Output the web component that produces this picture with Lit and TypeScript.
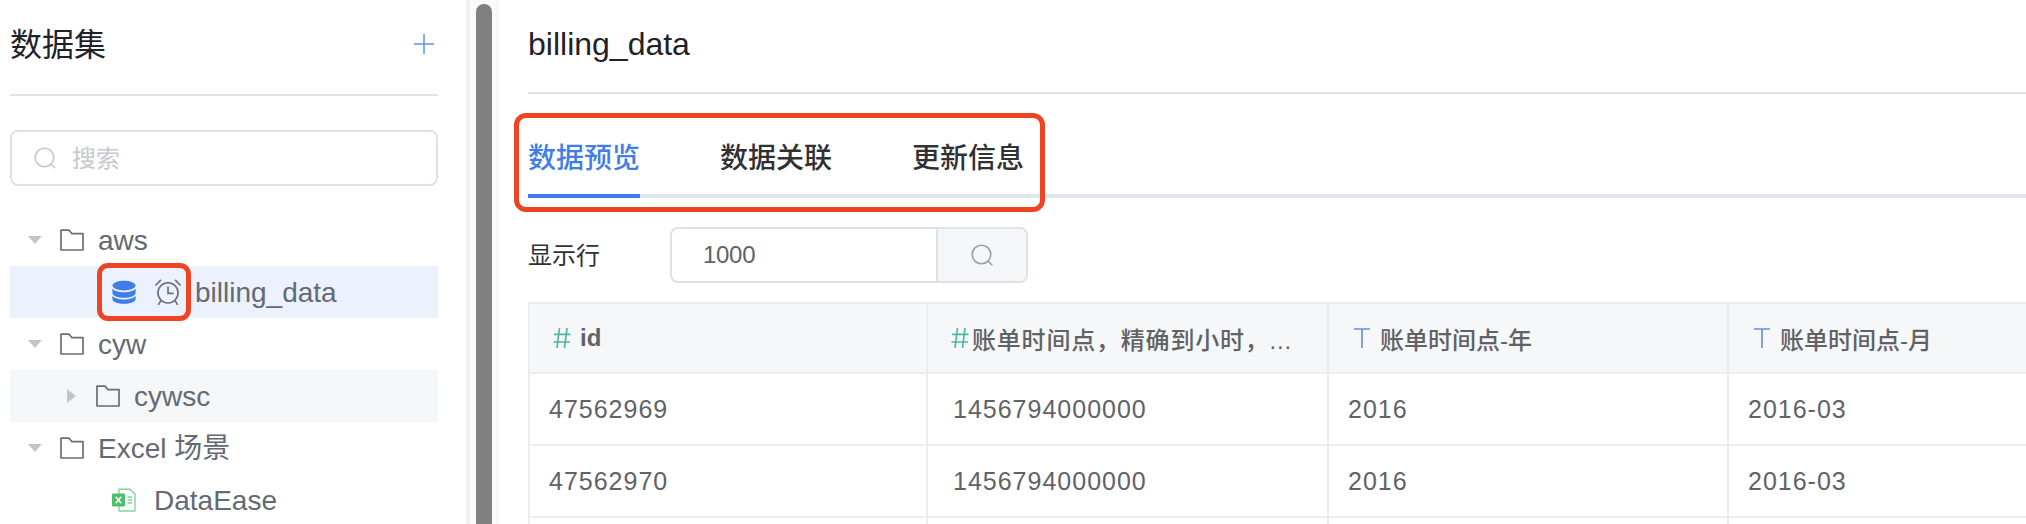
import { LitElement, html, css } from "lit";
import { customElement } from "lit/decorators.js";

const folder = html`<svg class="folder" viewBox="0 0 24 22" fill="none" stroke="#6b6d73" stroke-width="1.7"><path d="M1 21V1.2h8.2l2.6 3.4H23V21z" stroke-linejoin="round"/></svg>`;
const caretDown = html`<svg class="caret" viewBox="0 0 14 8"><path d="M0 0h14L7 8z" fill="#c0c4cc"/></svg>`;
const caretRight = html`<svg class="caret-r" viewBox="0 0 9 14"><path d="M0 0v14l9-7z" fill="#c0c4cc"/></svg>`;
const search = (c: string) => html`<svg class="search" viewBox="0 0 22 22" fill="none" stroke="${c}" stroke-width="1.6"><circle cx="10.5" cy="10.5" r="9.3"/><path d="M17.2 17.2l3.6 3.6" stroke-linecap="round"/></svg>`;
const db = html`<svg class="ico" viewBox="0 0 24 24"><g fill="#3f7ee8"><ellipse cx="12" cy="5.6" rx="11.6" ry="4.8"/><path d="M.4 8.6c2 2.6 6.6 3.7 11.600 3.700s9.600-1.100 11.600-3.700v4.300c0 2.700-5.200 4.800-11.600 4.800S.4 15.600.4 12.900z"/><path d="M.4 15.800c2 2.600 6.600 3.700 11.600 3.700s9.600-1.100 11.600-3.700V19c0 2.700-5.200 4.800-11.600 4.800S.4 21.700.4 19z"/></g></svg>`;
const clock = html`<svg class="ico clock" viewBox="0 0 24 24" fill="none" stroke="#6b6d73" stroke-width="1.5" stroke-linecap="round"><circle cx="12" cy="12.800" r="9.300"/><path d="M12 7.500v5.800h4.600M.8 5.500L5 1.300M23.200 5.500L19 1.300M5.400 20l-2 3.400M18.600 20l2 3.400"/></svg>`;
const excel = html`<svg class="ico" viewBox="0 0 24 24"><path d="M7 1.200h11l5 5v16a.8.8 0 0 1-.8.8H7.800a.8.8 0 0 1-.8-.8z" fill="#fff" stroke="#7ed69a" stroke-width="1.400"/><rect x="0" y="5.500" width="13" height="13" rx="1" fill="#4cbf6b"/><path d="M3.800 8.800l5.400 6.400M9.200 8.800l-5.400 6.400" stroke="#fff" stroke-width="1.500"/><path d="M15.500 9h4.500M15.500 12h4.500M15.500 15h4.500" stroke="#7ed69a" stroke-width="1.400"/></svg>`;
const hash = html`<svg class="type" viewBox="0 0 18 22" fill="none" stroke="#4fb5a6" stroke-width="1.700"><path d="M6.500 1L4 21M14 1l-2.500 20M1 7.300h16.500M.5 15h16.500"/></svg>`;
const tee = html`<svg class="type" viewBox="0 0 18 22" fill="none" stroke="#6d8fdc" stroke-width="1.700"><path d="M1 2h16M9 2v19"/></svg>`;

const cols = [
  { icon: hash, name: "id", cls: "b", vals: ["47562969", "47562970", ""] },
  { icon: hash, name: "账单时间点，精确到小时，...", cls: "wide", vals: ["1456794000000", "1456794000000", ""] },
  { icon: tee, name: "账单时间点-年", cls: "", vals: ["2016", "2016", ""] },
  { icon: tee, name: "账单时间点-月", cls: "", vals: ["2016-03", "2016-03", ""] },
];

@customElement("app-root")
export class AppRoot extends LitElement {
  static styles = css`
    :host { display: block; width: 2026px; height: 524px; overflow: hidden; background: #fff;
      font-family: "Liberation Sans", "Noto Sans CJK SC", sans-serif; color: #606266; }
    * { box-sizing: border-box; }
    .page { display: grid; grid-template-columns: 466px 32px 1fr; height: 524px; overflow: hidden; }
    .side { padding: 0 28px 0 10px; }
    .side-head { height: 96px; border-bottom: 2px solid #e0e2e9; display: flex; justify-content: space-between; align-items: center; padding: 0 4px 11px 0; }
    .side-title { font-size: 32px; color: #1f2329; }
    .plus { width: 20px; height: 20px; margin-top: 5px; }
    .search-box { margin-top: 34px; height: 56px; border: 2px solid #dfe1e8; border-radius: 8px; display: flex; align-items: center; padding-left: 22px; gap: 16px; font-size: 24px; color: #c6c8ce; }
    .search-box span { padding-bottom: 4px; }
    .search { width: 22px; height: 22px; flex: none; }
    .tree { margin-top: 28px; }
    .row { position: relative; height: 52px; display: flex; align-items: center; font-size: 28px; color: #646a73; white-space: nowrap; }
    .row span { line-height: 32px; padding-top: 2px; }
    .row.sel { background: #ebf2fd; }
    .row.hov { background: #f5f6f8; }
    .caret { width: 14px; height: 8px; margin-left: 18px; flex: none; }
    .caret-r { width: 9px; height: 14px; margin-left: 57px; flex: none; }
    .folder { width: 24px; height: 22px; margin-left: 18px; margin-right: 14px; flex: none; }
    .caret-r + .folder { margin-left: 20px; }
    .ico { width: 24px; height: 24px; flex: none; }
    .l3 { padding-left: 102px; }
    .ico.clock { width: 26px; height: 26px; margin-left: 19px; margin-right: 14px; }
    .gap { margin-left: 3px; }
    .gap-x { margin-right: 15px; }
    .l3 > .ico:only-of-type { margin-right: 15px; }
    .mark { position: absolute; left: 87px; top: -3px; width: 94px; height: 58px; border: 5px solid #ee4423; border-radius: 11px; }
    .gutter { border-left: 4px solid #f0f0f0; border-right: 1px solid #eeeeee; padding: 4px 0 0 6px; background: #fafafa; }
    .thumb { width: 16px; height: 560px; background: #808080; border-radius: 8px; }
    .main { padding-left: 30px; min-width: 0; }
    .main-head { height: 94px; border-bottom: 2px solid #e0e2e9; font-size: 32px; color: #1f2329; display: flex; align-items: center; padding-bottom: 4px; }
    .tabs { position: relative; height: 104px; border-bottom: 4px solid #e0e5f0; display: flex; gap: 80px; align-items: flex-end; font-size: 28px; font-weight: 500; color: #303133; }
    .tab { height: 62px; margin-bottom: -4px; border-bottom: 4px solid transparent; width: 112px; white-space: nowrap; }
    .tab.on { color: #3f7ee8; border-bottom-color: #3f7ee8; }
    .tabs-mark { position: absolute; left: -14px; top: 19px; width: 531px; height: 99px; border: 5px solid #ee4423; border-radius: 12px; }
    .rows { margin-top: 29px; display: flex; align-items: center; height: 56px; font-size: 24px; color: #303133; }
    .rows-label { width: 142px; padding-bottom: 4px; }
    .input { width: 358px; height: 56px; border: 2px solid #dfe1e8; border-radius: 8px; display: flex; overflow: hidden; }
    .input-val { flex: 1; padding-left: 31px; line-height: 52px; color: #606266; letter-spacing: -0.300px; }
    .input-btn { width: 90px; background: #f5f6f8; border-left: 2px solid #dfe1e8; display: flex; align-items: center; justify-content: center; }
    .table { margin-top: 19px; display: grid; grid-template-columns: 398px 401px 400px 400px 400px; width: 2000px; border-top: 2px solid #ebecef; border-left: 2px solid #ebecef; }
    .cell { height: 72px; border-right: 2px solid #ebecef; border-bottom: 2px solid #ebecef; display: flex; align-items: center; padding-left: 19px; font-size: 25px; letter-spacing: 1px; color: #606266; white-space: nowrap; overflow: hidden; }
    .cell.wide { padding-left: 25px; }
    .cell.th { height: 70px; background: #f6f7f9; padding-left: 24px; gap: 9px; font-size: 24px; letter-spacing: 0; font-weight: 500; }
    .th.b { font-weight: 700; padding-left: 23px; }
    .th.wide { padding-left: 23px; gap: 3px; letter-spacing: 0.800px; }
    .type { width: 18px; height: 22px; flex: none; }
  `;

  render() {
    return html`<div class="page">
      <aside class="side">
        <div class="side-head">
          <span class="side-title">数据集</span>
          <svg class="plus" viewBox="0 0 20 20" stroke="#5a95f0" stroke-width="1.500"><path d="M10 0v20M0 10h20"/></svg>
        </div>
        <div class="search-box">${search("#c6c8ce")}<span>搜索</span></div>
        <div class="tree">
          <div class="row">${caretDown}${folder}<span>aws</span></div>
          <div class="row sel l3">${db}${clock}<span>billing_data</span><div class="mark"></div></div>
          <div class="row">${caretDown}${folder}<span>cyw</span></div>
          <div class="row hov">${caretRight}${folder}<span>cywsc</span></div>
          <div class="row">${caretDown}${folder}<span>Excel 场景</span></div>
          <div class="row l3">${excel}<span class="gap">DataEase</span></div>
        </div>
      </aside>
      <div class="gutter"><div class="thumb"></div></div>
      <main class="main">
        <div class="main-head">billing_data</div>
        <div class="tabs">
          <div class="tab on">数据预览</div><div class="tab">数据关联</div><div class="tab">更新信息</div>
          <div class="tabs-mark"></div>
        </div>
        <div class="rows">
          <span class="rows-label">显示行</span>
          <div class="input"><div class="input-val">1000</div><div class="input-btn">${search("#9a9da3")}</div></div>
        </div>
        <div class="table">
          ${cols.map((c) => html`<div class="cell th ${c.cls}">${c.icon}<span>${c.name}</span></div>`)}
          <div class="cell th"></div>
          ${[0, 1, 2].map((r) => html`${cols.map((c) => html`<div class="cell ${c.cls === "wide" ? "wide" : ""}">${c.vals[r]}</div>`)}<div class="cell"></div>`)}
        </div>
      </main>
    </div>`;
  }
}
